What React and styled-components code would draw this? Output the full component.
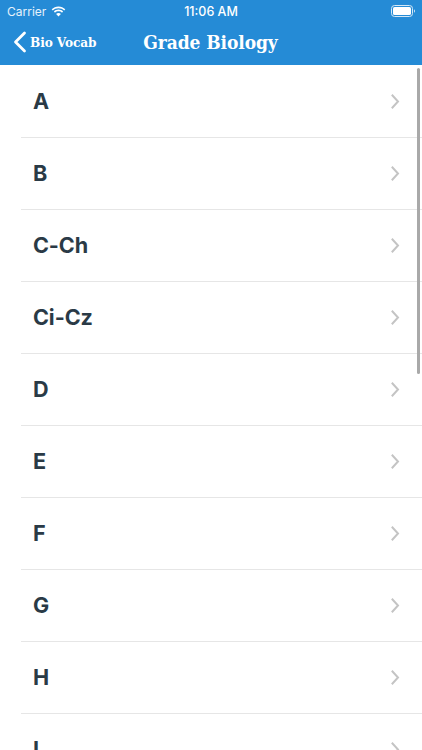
import React from "react";
import styled, { createGlobalStyle } from "styled-components";

const GlobalStyle = createGlobalStyle`
  html, body {
    margin: 0;
    padding: 0;
    height: 100%;
    overflow: hidden;
    background: #fff;
  }
`;

const Screen = styled.div`
  position: relative;
  width: 422px;
  height: 750px;
  overflow: hidden;
  display: flex;
  flex-direction: column;
  font-family: "Inter", "Liberation Sans", sans-serif;
`;

const Header = styled.header`
  flex: none;
  height: 65px;
  background: #258bd6;
  color: #fff;
`;

const StatusBar = styled.div`
  height: 22px;
  padding: 0 7px;
  display: grid;
  grid-template-columns: 1fr auto 1fr;
  align-items: center;
  font-size: 12px;
  font-weight: 400;
`;

const Carrier = styled.div`
  display: flex;
  align-items: center;
  gap: 5px;
  color: #e6f2fb;
`;

const Clock = styled.div`
  font-weight: 500;
  font-size: 12.5px;
`;

const Battery = styled.div`
  justify-self: end;
  display: flex;
  align-items: center;
`;

const NavBar = styled.div`
  position: relative;
  height: 43px;
  display: flex;
  align-items: center;
  justify-content: center;
`;

const BackLink = styled.div`
  position: absolute;
  left: 13px;
  top: 9px;
  display: flex;
  align-items: center;
  gap: 3px;
  font-family: "DejaVu Serif Condensed", "DejaVu Serif", serif;
  font-weight: 700;
  font-size: 13.5px;
  letter-spacing: -0.1px;
`;

const Title = styled.h1`
  margin: 0 0 3px -1px;
  font-family: "DejaVu Serif Condensed", "DejaVu Serif", serif;
  font-weight: 700;
  font-size: 19px;
  letter-spacing: -0.1px;
`;

const List = styled.ul`
  list-style: none;
  margin: 0;
  padding: 1px 0 0 21px;
`;

const Row = styled.li`
  height: 71px;
  padding: 0 22px 0 12px;
  border-bottom: 1px solid #e6e6e6;
  display: flex;
  align-items: center;
  justify-content: space-between;
`;

const Label = styled.span`
  font-size: 21.6px;
  line-height: 24px;
  margin-bottom: 1px;
  font-weight: 700;
  color: #2a3a46;
  letter-spacing: -0.1px;
`;

const ScrollThumb = styled.div`
  position: absolute;
  top: 68px;
  right: 2px;
  width: 3px;
  height: 306px;
  border-radius: 2px;
  background: #a9a9a9;
`;

const Wifi = () => (
  <svg width="15" height="11" viewBox="0 0 15 11" fill="#fff">
    <path d="M7.5 2.2c2.2 0 4.2.9 5.7 2.3l1.1-1.2C12.5 1.5 10.1.4 7.5.4S2.5 1.5.7 3.3l1.1 1.2c1.5-1.4 3.5-2.3 5.7-2.3z" />
    <path d="M7.5 5.3c1.3 0 2.5.5 3.5 1.4l1.1-1.2C10.9 4.3 9.3 3.6 7.5 3.6s-3.4.7-4.6 1.9L4 6.7c1-.9 2.2-1.4 3.5-1.4z" />
    <path d="M7.5 6.9c-1 0-1.8.4-2.4 1l2.4 2.6 2.4-2.6c-.6-.6-1.4-1-2.4-1z" />
  </svg>
);

const BatteryIcon = () => (
  <svg width="24" height="12" viewBox="0 0 24 12">
    <rect x="0.5" y="0.5" width="21" height="11" rx="3" fill="none" stroke="#d4e8f7" />
    <rect x="2" y="2" width="18" height="8" rx="1.6" fill="#fff" />
    <path d="M23 4.2c.6.3 1 .9 1 1.8s-.4 1.5-1 1.8z" fill="#d4e8f7" />
  </svg>
);

const BackChevron = () => (
  <svg width="14" height="22" viewBox="0 0 14 22" fill="none" stroke="#fff" strokeWidth="2.8" strokeLinecap="round" strokeLinejoin="round">
    <path d="M11.5 2 2.5 11l9 9" />
  </svg>
);

const RowChevron = () => (
  <svg width="9" height="15" viewBox="0 0 9 15" fill="none" stroke="#c4c4c4" strokeWidth="2" strokeLinecap="square">
    <path d="M1.5 1.5 7 7.5 1.5 13.5" />
  </svg>
);

const sections = ["A", "B", "C-Ch", "Ci-Cz", "D", "E", "F", "G", "H", "I"];

export default function App() {
  return (
    <Screen>
      <GlobalStyle />
      <Header>
        <StatusBar>
          <Carrier>
            Carrier
            <Wifi />
          </Carrier>
          <Clock>11:06 AM</Clock>
          <Battery>
            <BatteryIcon />
          </Battery>
        </StatusBar>
        <NavBar>
          <BackLink>
            <BackChevron />
            Bio Vocab
          </BackLink>
          <Title>Grade Biology</Title>
        </NavBar>
      </Header>
      <List>
        {sections.map((name) => (
          <Row key={name}>
            <Label>{name}</Label>
            <RowChevron />
          </Row>
        ))}
      </List>
      <ScrollThumb />
    </Screen>
  );
}
